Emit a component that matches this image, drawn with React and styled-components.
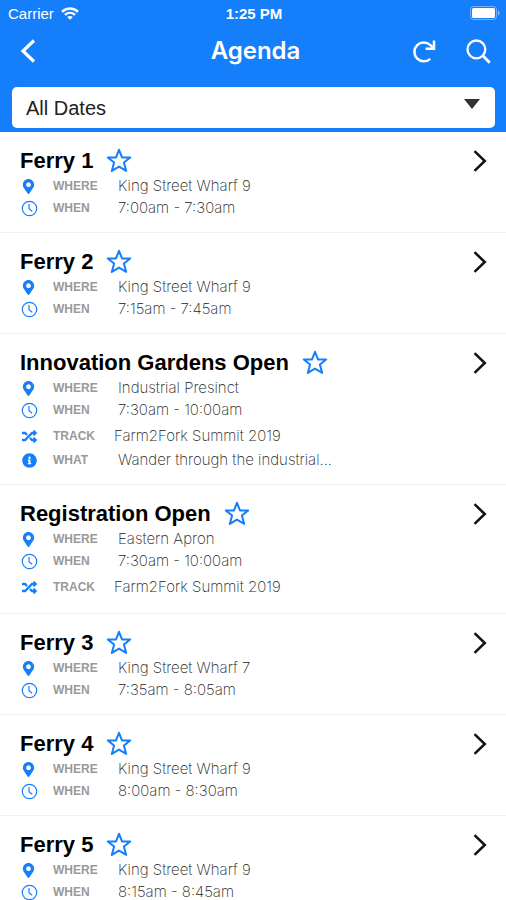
import React from "react";
import styled, { createGlobalStyle } from "styled-components";
import { FaMapMarkerAlt, FaRandom, FaInfoCircle } from "react-icons/fa";

const BLUE = "#157efb";

const sessions = [
    { title: "Ferry 1", where: "King Street Wharf 9", when: "7:00am - 7:30am" },
    { title: "Ferry 2", where: "King Street Wharf 9", when: "7:15am - 7:45am" },
    {
        title: "Innovation Gardens Open",
        where: "Industrial Presinct",
        when: "7:30am - 10:00am",
        track: "Farm2Fork Summit 2019",
        what: "Wander through the industrial..."
    },
    {
        title: "Registration Open",
        where: "Eastern Apron",
        when: "7:30am - 10:00am",
        track: "Farm2Fork Summit 2019"
    },
    { title: "Ferry 3", where: "King Street Wharf 7", when: "7:35am - 8:05am" },
    { title: "Ferry 4", where: "King Street Wharf 9", when: "8:00am - 8:30am" },
    { title: "Ferry 5", where: "King Street Wharf 9", when: "8:15am - 8:45am" }
];

const WifiIcon = () => (
    <svg width="18" height="13" viewBox="0 0 18 13" fill="none" stroke="#fff" strokeWidth="2.4">
        <path d="M1 4.8C5.6 .4 12.4 .4 17 4.8" />
        <path d="M4 7.9c2.9-2.7 7.1-2.7 10 0" />
        <path d="M9 12.8 6.2 10c1.6-1.5 4-1.5 5.6 0z" fill="#fff" stroke="none" />
    </svg>
);

const BatteryIcon = () => (
    <svg width="30" height="14" viewBox="0 0 30 14">
        <rect x=".5" y=".5" width="26" height="13" rx="3" fill="none" stroke="#fff" strokeOpacity=".4" />
        <rect x="2" y="2" width="23" height="10" rx="1.5" fill="#fff" />
        <path d="M28 4.5c2 .8 2 4.2 0 5z" fill="#fff" fillOpacity=".5" />
    </svg>
);

const BackIcon = () => (
    <svg width="16" height="24" viewBox="0 0 16 24" fill="none" stroke="#fff" strokeWidth="3.2">
        <path d="M14 1.5 3 12l11 10.5" />
    </svg>
);

const RefreshIcon = () => (
    <svg width="24" height="24" viewBox="0 0 24 24" fill="none" stroke="#fff" strokeWidth="2.5">
        <path d="M18.2 19.8A9.4 9.4 0 1 1 18.4 6.2L21.4 9.2" />
        <path d="M22 1.4v8.4h-8.4" />
    </svg>
);

const SearchIcon = () => (
    <svg width="25" height="25" viewBox="0 0 25 25" fill="none" stroke="#fff" strokeWidth="2.3">
        <circle cx="10.4" cy="10.4" r="8.9" />
        <path d="m16.8 16.8 7 7" strokeWidth="2.8" />
    </svg>
);

const StarIcon = () => (
    <svg width="26" height="26" viewBox="0 0 26 26" fill="none" stroke={BLUE} strokeWidth="2" strokeLinejoin="round">
        <path d="M13 1.8l3 7.6h8.2l-6.3 5.2 2.3 8.3L13 18.6l-7.2 4.3 2.3-8.3-6.3-5.2H10z" />
    </svg>
);

const ForwardIcon = () => (
    <svg width="14" height="24" viewBox="0 0 14 24" fill="none" stroke="#111" strokeWidth="2.5">
        <path d="M1.5 2.2 11.8 12 1.5 21.8" />
    </svg>
);

const ClockIcon = () => (
    <svg width="17" height="17" viewBox="0 0 17 17" fill="none" stroke={BLUE} strokeWidth="1.2">
        <circle cx="8.5" cy="8.5" r="7.2" />
        <path d="M8 4v4.8l3.2 2.4" />
    </svg>
);

const details = [
    { key: "where", label: "WHERE", icon: <FaMapMarkerAlt size={15} /> },
    { key: "when", label: "WHEN", icon: <ClockIcon /> },
    { key: "track", label: "TRACK", icon: <FaRandom size={15} /> },
    { key: "what", label: "WHAT", icon: <FaInfoCircle size={15} /> }
];

const Session = ({ session }) => (
    <Row>
        <TitleLine>
            <Title>{session.title}</Title>
            <IconButton aria-label={"Favourite " + session.title}>
                <StarIcon />
            </IconButton>
            <OpenButton aria-label={"Open " + session.title}>
                <ForwardIcon />
            </OpenButton>
        </TitleLine>
        <dl>
            {details.filter((d) => session[d.key]).map((d) => (
                <Detail key={d.key} $track={d.key === "track"}>
                    <DetailIcon $tight={d.key === "when" || d.key === "where"}>{d.icon}</DetailIcon>
                    <Label>{d.label}</Label>
                    <Value>{session[d.key]}</Value>
                </Detail>
            ))}
        </dl>
    </Row>
);

const App = () => (
    <Screen>
        <GlobalStyle />
        <Header>
            <StatusBar>
                <Carrier>Carrier <WifiIcon /></Carrier>
                <Time>1:25 PM</Time>
                <Battery><BatteryIcon /></Battery>
            </StatusBar>
            <NavBar>
                <NavSide>
                    <IconButton aria-label="Back"><BackIcon /></IconButton>
                </NavSide>
                <Heading>Agenda</Heading>
                <NavSide $end>
                    <IconButton aria-label="Refresh"><RefreshIcon /></IconButton>
                    <IconButton aria-label="Search"><SearchIcon /></IconButton>
                </NavSide>
            </NavBar>
            <SelectWrap>
                <DateSelect aria-label="Dates" defaultValue="all">
                    <option value="all">All Dates</option>
                </DateSelect>
                <Arrow />
            </SelectWrap>
        </Header>
        <List>
            {sessions.map((s) => <Session key={s.title} session={s} />)}
        </List>
    </Screen>
);

const GlobalStyle = createGlobalStyle`
* {
    box-sizing: border-box;
    margin: 0;
    padding: 0;
}
body {
    background: #fff;
    font-family: "Liberation Sans", Arial, sans-serif;
}
svg {
    display: block;
    flex: none;
}
`;

const Screen = styled.div`
display: flex;
flex-direction: column;
height: 100vh;
`;

const Header = styled.header`
flex: none;
background: ${BLUE};
color: #fff;
padding-bottom: 4px;
`;

const StatusBar = styled.div`
display: grid;
grid-template-columns: 1fr auto 1fr;
align-items: center;
height: 26px;
padding: 0 6px 0 8px;
font-size: 15px;
`;

const Carrier = styled.span`
display: flex;
align-items: center;
gap: 7px;
`;

const Time = styled.span`
font-weight: bold;
`;

const Battery = styled.span`
justify-self: end;
`;

const NavBar = styled.nav`
display: grid;
grid-template-columns: 1fr auto 1fr;
align-items: center;
height: 50px;
padding: 0 15px 0 20px;
`;

const NavSide = styled.div`
display: flex;
gap: 30px;
justify-content: ${(props) => (props.$end ? "flex-end" : "flex-start")};
`;

const Heading = styled.h1`
font-family: Inter, sans-serif;
font-size: 24px;
font-weight: 600;
line-height: 28px;
`;

const IconButton = styled.button`
display: flex;
border: none;
background: none;
cursor: pointer;
`;

const SelectWrap = styled.div`
position: relative;
margin: 11px 11px 0 12px;
`;

const DateSelect = styled.select`
display: block;
width: 100%;
height: 41px;
padding: 0 14px;
border: none;
border-radius: 5px;
background: #fff;
color: #222;
font-family: inherit;
font-size: 20px;
appearance: none;
`;

const Arrow = styled.span`
position: absolute;
top: 12px;
right: 15px;
border: 8px solid transparent;
border-top: 10px solid #333;
border-bottom: none;
pointer-events: none;
`;

const List = styled.ul`
flex: 1;
overflow-y: auto;
scrollbar-width: none;
list-style: none;
`;

const Row = styled.li`
padding: 15px 19px 13px 20px;
border-bottom: 1px solid #f0f0f0;
`;

const TitleLine = styled.div`
display: flex;
align-items: center;
gap: 13px;
height: 28px;
`;

const Title = styled.h2`
color: #000;
font-size: 22px;
line-height: 26px;
`;

const OpenButton = styled(IconButton)`
margin-left: auto;
`;

const Detail = styled.div`
display: grid;
grid-template-columns: 33px ${(props) => (props.$track ? "61px" : "65px")} 1fr;
align-items: center;
height: 22px;
margin: ${(props) => (props.$track ? "4px 0 2px" : "0")};
`;

const DetailIcon = styled.span`
display: flex;
padding-left: ${(props) => (props.$tight ? "1px" : "2px")};
color: ${BLUE};
`;

const Label = styled.dt`
color: #999;
font-size: 12px;
font-weight: bold;
`;

const Value = styled.dd`
color: #222;
font-family: Inter, sans-serif;
font-size: 15px;
font-weight: 200;
line-height: 22px;
white-space: nowrap;
`;

export default App;
